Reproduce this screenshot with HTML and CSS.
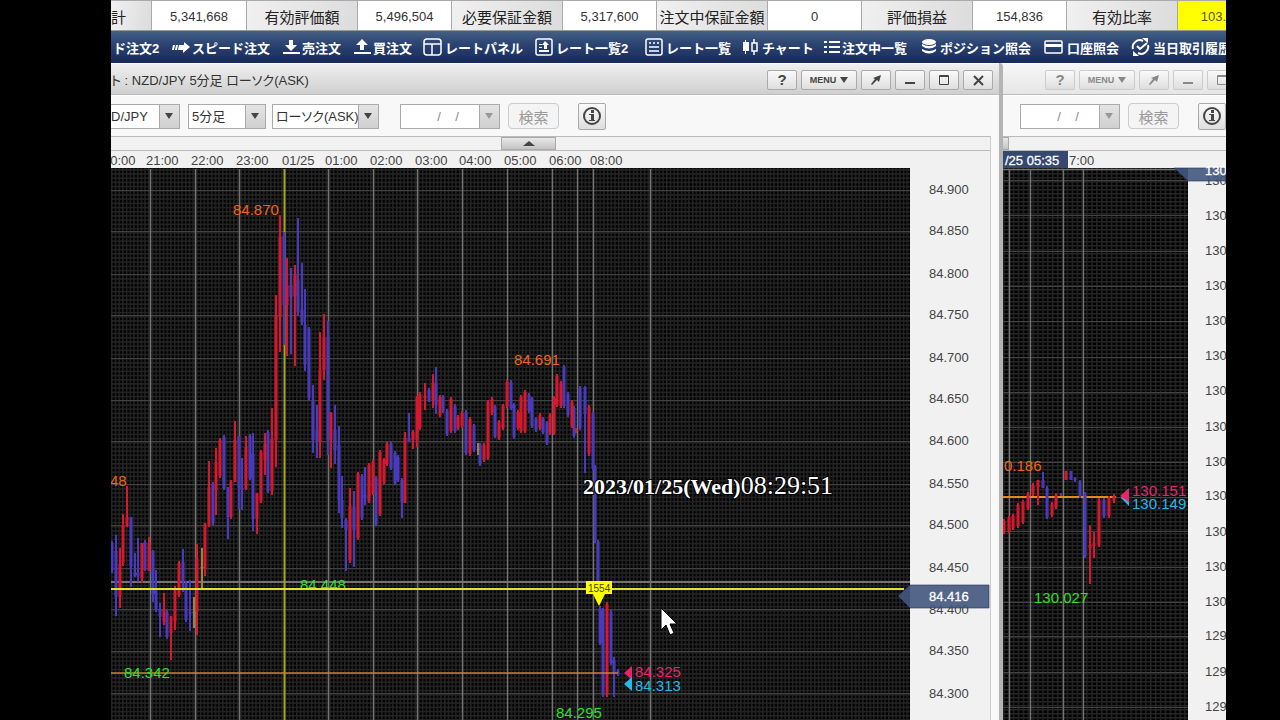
FILE: index.html
```html
<!DOCTYPE html>
<html lang="ja">
<head>
<meta charset="utf-8">
<title>チャート : NZD/JPY 5分足</title>
<link rel="stylesheet" href="styles.css">
</head>
<body>
<div class="desktop">
  <dl class="summary">
    <dt>計</dt><dd>5,341,668</dd>
    <dt>有効評価額</dt><dd>5,496,504</dd>
    <dt>必要保証金額</dt><dd>5,317,600</dd>
    <dt>注文中保証金額</dt><dd>0</dd>
    <dt>評価損益</dt><dd>154,836</dd>
    <dt>有効比率</dt><dd class="alert">103.</dd>
  </dl>

  <nav class="menu">
    <a href="#">ド注文2</a>
    <a href="#"><svg width="18" height="18" viewBox="0 0 18 18"><path d="M1 7l-1 5h2l1-5zM4 7l-1 5h2l1-5zM7 7l-1 5h5v3l7-6-6-5v3z"/></svg>スピード注文</a>
    <a href="#"><svg width="17" height="18" viewBox="0 0 17 18"><path d="M6 2h4v5h4l-6 6-6-6h4zM0 14h17v2H0z"/></svg>売注文</a>
    <a href="#"><svg width="17" height="18" viewBox="0 0 17 18"><path d="M6 12h4V7h4L8 1 2 7h4zM0 14h17v2H0z"/></svg>買注文</a>
    <a href="#"><svg width="20" height="18" viewBox="0 0 20 18"><rect class="line" x="1" y="1" width="17" height="16" rx="3"/><path class="line" d="M1 6h17M9 6v11"/></svg>レートパネル</a>
    <a href="#"><svg width="19" height="18" viewBox="0 0 19 18"><rect class="line" x="1" y="1" width="16" height="16" rx="2"/><path d="M4 6h3v1H4zM4 9h3v1H4zM4 12h10v2H4zM9 11h3V7h2l-4-4-3 4h2z"/></svg>レート一覧2</a>
    <a href="#"><svg width="19" height="18" viewBox="0 0 19 18"><rect class="line" x="1" y="1" width="16" height="16" rx="2"/><path class="line" d="M4 5h2M8 5h2M12 5h2M4 9h10M4 13h10"/></svg>レート一覧</a>
    <a href="#"><svg width="18" height="18" viewBox="0 0 18 18"><path d="M3 2h1v2h3v9H4v3H3v-3H1V4h2z"/><path class="line" d="M10 5h5v8h-5zM12 1v4M12 13v4"/></svg>チャート</a>
    <a href="#"><svg width="16" height="18" viewBox="0 0 16 18"><path d="M0 3h3v2H0zM5 3h11v2H5zM0 8h3v2H0zM5 8h11v2H5zM0 13h3v2H0zM5 13h11v2H5z"/></svg>注文中一覧</a>
    <a href="#"><svg width="17" height="18" viewBox="0 0 17 18"><ellipse cx="8" cy="4" rx="7" ry="3"/><path d="M1 6q7 4 14 0v2q-7 5-14 0zM1 11q7 4 14 0v2q-7 5-14 0z"/></svg>ポジション照会</a>
    <a href="#"><svg width="21" height="18" viewBox="0 0 21 18"><rect class="line" x="1" y="3" width="17" height="12" rx="1"/><path d="M1 6h17v3H1z"/></svg>口座照会</a>
    <a href="#"><svg width="20" height="18" viewBox="0 0 20 18"><path class="line thick" d="M2 11a7 7 0 0 1 10-8M17 7a7 7 0 0 1-10 8M6 8l3 3 7-6"/><path d="M11 0h6v5zM8 18H2v-5z"/></svg>当日取引履歴</a>
  </nav>

  <main class="windows">
    <section class="window window-main">
      <header class="titlebar">
        <h1>ト : NZD/JPY 5分足 ローソク(ASK)</h1>
        <div class="buttons">
          <button type="button" class="help" aria-label="ヘルプ">?</button>
          <button type="button" class="wide">MENU <i class="down"></i></button>
          <button type="button" aria-label="切り離し"><svg width="12" height="12" viewBox="0 0 12 12"><path d="M11 1L9 8 7 6 2 11 1 10 5 5 3 4z"/></svg></button>
          <button type="button" aria-label="最小化"><svg width="12" height="12" viewBox="0 0 12 12"><path d="M1 8h10v2H1z"/></svg></button>
          <button type="button" aria-label="最大化"><svg width="12" height="12" viewBox="0 0 12 12"><path class="line" d="M1.500 1.500h9v9h-9zM1 2.500h10"/></svg></button>
          <button type="button" aria-label="閉じる"><svg width="12" height="12" viewBox="0 0 12 12"><path class="line thick" d="M2 2l9 9M11 2l-9 9"/></svg></button>
        </div>
      </header>
      <form class="toolbar">
        <span class="combo pair"><select aria-label="通貨ペア"><option>D/JPY</option></select><i class="down"></i></span>
        <span class="combo span"><select aria-label="足種"><option>5分足</option></select><i class="down"></i></span>
        <span class="combo style"><select aria-label="チャート種類"><option>ローソク(ASK)</option></select><i class="down"></i></span>
        <span class="combo date"><input type="text" aria-label="日付" value="/&#160;&#160;&#160;&#160;/"><i class="down"></i></span>
        <button type="button" class="search">検索</button>
        <button type="button" class="info" aria-label="情報"><svg width="20" height="20" viewBox="0 0 20 20"><circle class="line thick" cx="10" cy="10" r="8"/><path d="M9 4h3v3H9zM7 8h5v6h1v1H7v-1h2V9H7z"/></svg></button>
      </form>
      <div class="panel">
        <div class="fold"><button type="button" aria-label="折りたたむ"><i class="up"></i></button></div>
        <svg class="chart" viewBox="111 151 879 569">
          <defs>
            <pattern id="mesh" x="111" y="169" width="3.7" height="4.2" patternUnits="userSpaceOnUse"><path class="mesh" d="M0 0H3.7M0 0V4.2"/></pattern>
          </defs>
          <rect class="plot" x="111" y="168" width="799" height="552"/>
          <rect x="111" y="168" width="799" height="552" fill="url(#mesh)"/>
          <path class="grid-h" d="M111 190.500H910M111 231.500H910M111 274.500H910M111 315.500H910M111 358.500H910M111 400.500H910M111 441.500H910M111 484.500H910M111 525.500H910M111 568.500H910M111 609.500H910M111 651.500H910M111 693.500H910"/>
          <path class="grid-v" d="M150.500 169V720M195.500 169V720M239.500 169V720M328.500 169V720M373.500 169V720M417.500 169V720M462.500 169V720M507.500 169V720M552.500 169V720M577.500 169V720M593.500 169V720M650.500 169V720"/>
          <path class="level" d="M111 582H910"/>
          <path class="session" d="M284.500 169V720"/>
          <g id="candles-main"></g>
          <path class="ask" d="M111 673H618"/>
          <g class="time"><text x="103" y="165">20:00</text><text x="146" y="165">21:00</text><text x="191" y="165">22:00</text><text x="236" y="165">23:00</text><text x="282" y="165">01/25</text><text x="325" y="165">01:00</text><text x="370" y="165">02:00</text><text x="415" y="165">03:00</text><text x="459" y="165">04:00</text><text x="504" y="165">05:00</text><text x="549" y="165">06:00</text><text x="590" y="165">08:00</text></g>
          <g class="high"><text x="233" y="215">84.870</text><text x="514" y="365">84.691</text><text x="110" y="486">48</text></g>
          <g class="low"><text x="300" y="590">84.448</text><text x="124" y="678">84.342</text><text x="556" y="718">84.295</text></g>
          <path class="cursor-line" d="M111 589H904"/>
          <path class="flag" d="M586 581h26v13h-7l-6 12-6-12h-7z"/>
          <text class="flag-text" x="588" y="592">1554</text>
          <path class="ask-fill" d="M624 673l8-7v14z"/><path class="bid-fill" d="M624 684l8-7v14z"/>
          <text class="ask-text" x="635" y="677">84.325</text>
          <text class="bid-text" x="635" y="691">84.313</text>
          <g class="price"><text x="929" y="194">84.900</text><text x="929" y="235">84.850</text><text x="929" y="278">84.800</text><text x="929" y="319">84.750</text><text x="929" y="362">84.700</text><text x="929" y="403">84.650</text><text x="929" y="445">84.600</text><text x="929" y="488">84.550</text><text x="929" y="529">84.500</text><text x="929" y="572">84.450</text><text x="929" y="614">84.400</text><text x="929" y="655">84.350</text><text x="929" y="698">84.300</text></g>
          <path class="tag" d="M898 596l12-11h79v23h-79z"/>
          <text class="tag-text" x="929" y="601">84.416</text>
          <text class="clock" x="583" y="494">2023/01/25(Wed)<tspan class="clock-time">08:29:51</tspan></text>
          <path class="pointer" d="M661 608v22l5-5 4 10 4-2-4-9h7z"/>
        </svg>
      </div>
    </section>

    <section class="window window-side">
      <header class="titlebar">
        <div class="buttons">
          <button type="button" class="help" aria-label="ヘルプ">?</button>
          <button type="button" class="wide">MENU <i class="down"></i></button>
          <button type="button" aria-label="切り離し"><svg width="12" height="12" viewBox="0 0 12 12"><path d="M11 1L9 8 7 6 2 11 1 10 5 5 3 4z"/></svg></button>
          <button type="button" aria-label="最小化"><svg width="12" height="12" viewBox="0 0 12 12"><path d="M1 8h10v2H1z"/></svg></button>
          <button type="button" aria-label="最大化"><svg width="12" height="12" viewBox="0 0 12 12"><path class="line" d="M1.500 1.500h9v9h-9zM1 2.500h10"/></svg></button>
        </div>
      </header>
      <form class="toolbar">
        <span class="combo date"><input type="text" aria-label="日付" value="/&#160;&#160;&#160;&#160;/"><i class="down"></i></span>
        <button type="button" class="search">検索</button>
        <button type="button" class="info" aria-label="情報"><svg width="20" height="20" viewBox="0 0 20 20"><circle class="line thick" cx="10" cy="10" r="8"/><path d="M9 4h3v3H9zM7 8h5v6h1v1H7v-1h2V9H7z"/></svg></button>
      </form>
      <div class="panel">
        <div class="fold"><button type="button" aria-label="折りたたむ"></button></div>
        <svg class="chart" viewBox="1003 151 223 569">
          <defs>
            <pattern id="mesh-side" x="1003" y="169" width="4.9" height="4" patternUnits="userSpaceOnUse"><path class="mesh" d="M0 0H4.9M0 0V4"/></pattern>
          </defs>
          <rect class="plot" x="1003" y="168" width="185" height="552"/>
          <rect x="1003" y="168" width="185" height="552" fill="url(#mesh-side)"/>
          <path class="grid-h" d="M1003 180.500H1188M1003 215.500H1188M1003 251.500H1188M1003 286.500H1188M1003 321.500H1188M1003 357.500H1188M1003 392.500H1188M1003 427.500H1188M1003 462.500H1188M1003 497.500H1188M1003 531.500H1188M1003 567.500H1188M1003 602.500H1188M1003 636.500H1188M1003 672.500H1188M1003 707.500H1188"/>
          <path class="grid-v" d="M1009.500 169V720M1030.500 169V720M1063.500 169V720M1083.500 169V720M1003 169.500H1176"/>
          <path class="ask" d="M1003 497H1116"/>
          <g id="candles-side"></g>
          <path class="time-tag" d="M1003 151h65v17h-65z"/>
          <text class="tag-text" x="1005" y="165">/25 05:35</text>
          <text class="time" x="1069" y="165">7:00</text>
          <text class="high" x="1004" y="471">0.186</text>
          <text class="low" x="1034" y="603">130.027</text>
          <path class="bid-fill" d="M1121 498l8-8v16z"/><path class="ask-fill" d="M1120 496l9-8v14z"/>
          <text class="ask-text" x="1132" y="496">130.151</text>
          <text class="bid-text" x="1132" y="509">130.149</text>
          <g class="price"><text x="1205" y="185">130</text><text x="1205" y="220">130</text><text x="1205" y="255">130</text><text x="1205" y="290">130</text><text x="1205" y="325">130</text><text x="1205" y="360">130</text><text x="1205" y="395">130</text><text x="1205" y="431">130</text><text x="1205" y="466">130</text><text x="1205" y="500">130</text><text x="1205" y="536">130</text><text x="1205" y="571">130</text><text x="1205" y="606">130</text><text x="1205" y="640">129</text><text x="1205" y="676">129</text><text x="1205" y="711">129</text></g>
          <path class="tag" d="M1174 168h52v13h-38z"/>
          <text class="tag-text" x="1205" y="175">130</text>
        </svg>
      </div>
    </section>
  </main>
</div>
<script src="chart.js"></script>
</body>
</html>
```

FILE: styles.css
```css
* { box-sizing: border-box; }
:root {
  --ui: "Liberation Sans", "Noto Sans CJK JP", sans-serif;
}
body {
  margin: 0;
  padding: 0 54px 0 111px;
  background: #000;
  font-family: var(--ui);
  color: #333;
}
.desktop {
  height: 100vh;
  overflow: hidden;
  background: #f4f4f4;
  display: flex;
  flex-direction: column;
}
.line { fill: none; stroke: currentColor; stroke-width: 1; }
.thick { stroke-width: 2; }
i.down, i.up { border: 4px solid transparent; }
i.down { border-top: 6px solid currentColor; border-bottom: 0; }
i.up { border-width: 6px; border-bottom: 5px solid #444; border-top: 0; }

.summary {
  margin: 0;
  flex: none;
  height: 31px;
  display: grid;
  grid-template-columns: 41fr 95fr 111fr 94fr 111fr 94fr 111fr 94fr 111fr 94fr 111fr 48fr;
  border-top: 1px solid #aaa;
  border-bottom: 1px solid #999;
  white-space: nowrap;
  overflow: hidden;
}
.summary dt, .summary dd {
  margin: 0;
  padding-top: 1px;
  display: flex;
  align-items: center;
  justify-content: center;
  border-right: 1px solid #aaa;
}
.summary dt { font-size: 15px; color: #222; background: linear-gradient(100deg, #f0f0f0, #dcdcdc); }
.summary dt:first-child { justify-content: flex-start; }
.summary dd { font-size: 13px; background: #fff; }
.summary .alert { background: #ff0; color: #554; justify-content: flex-end; border: 0; }

.menu {
  flex: none;
  height: 32px;
  padding-left: 2px;
  display: grid;
  grid-template-columns: 59fr 111fr 71fr 69fr 112fr 110fr 97fr 82fr 97fr 123fr 87fr minmax(0, 95fr);
  background: linear-gradient(#456083, #2b4472 40%, #172a5a);
  overflow: hidden;
}
.menu a {
  display: flex;
  align-items: center;
  gap: 2px;
  color: #fff;
  font-size: 13px;
  font-weight: 700;
  text-decoration: none;
  white-space: nowrap;
}
.menu svg { flex: none; fill: #fff; }
.menu .line { fill: none; stroke-width: 1.5; }
.menu .thick { stroke-width: 2; }

.windows {
  flex: 1;
  display: grid;
  grid-template-columns: minmax(0, 892fr) minmax(0, 223fr);
  min-height: 0;
}
.window { overflow: hidden; background: #f8f8f8; }
.window-main { border-right: 4px solid #b4b4b4; border-radius: 0 4px 0 0; }
.titlebar {
  height: 32px;
  padding-right: 6px;
  display: flex;
  align-items: center;
  justify-content: space-between;
  border-top: 1px solid #fff;
  border-bottom: 1px solid #bbb;
  background: linear-gradient(#efefef, #cfcfcf);
}
.titlebar h1 {
  margin: 0;
  font-size: 13px;
  font-weight: 400;
  white-space: pre;
  font-feature-settings: "palt";
}
.buttons { display: flex; gap: 4px; margin-top: 1px; }
button {
  flex: none;
  padding: 0;
  display: flex;
  align-items: center;
  justify-content: center;
  border: 1px solid #aaa;
  border-radius: 2px;
  background: linear-gradient(#fafafa, #dedede);
  color: #444;
  font-family: var(--ui);
}
.buttons button { width: 30px; height: 20px; }
.buttons .wide { width: 56px; gap: 4px; font: 700 9px var(--ui); }
.buttons .help { font-size: 15px; font-weight: 700; }
.buttons svg, .info svg { fill: currentColor; }
.buttons .line, .info .line { fill: none; }

.toolbar {
  height: 41px;
  display: flex;
  align-items: center;
  border-top: 1px solid #fff;
}
.combo {
  flex: none;
  height: 25px;
  display: flex;
  align-items: center;
  border: 1px solid #aaa;
  background: linear-gradient(#e4e4e4, #d0d0d0);
}
.combo select, .combo input {
  appearance: none;
  flex: 1;
  min-width: 0;
  height: 100%;
  margin: 0;
  padding: 0 0 0 3px;
  border: 0;
  border-right: 1px solid #aaa;
  border-radius: 0;
  background: #fff;
  color: #333;
  font: 13px var(--ui);
  font-feature-settings: "palt";
}
.combo i { margin: 0 6px 0 5px; color: #444; }
.pair { width: 69px; border-left: 0; }
.pair select { padding-left: 0; }
.span { width: 78px; margin-left: 8px; }
.style { width: 107px; margin-left: 6px; }
.date { width: 100px; margin-left: 21px; }
.date input { text-align: center; color: #888; padding-left: 16px; }
.date i { color: #999; }
.search { width: 51px; height: 26px; margin-left: 8px; border-color: #ccc; border-radius: 4px; background: #f4f4f4; color: #999; font-size: 15px; }
.info { width: 28px; height: 27px; margin-left: 19px; }

.panel { border-top: 1px solid #bbb; background: #f1f1f1; }
.window-main .panel { margin-right: 8px; border-right: 1px solid #ccc; }
.fold { height: 14px; display: flex; justify-content: center; border-bottom: 1px solid #bbb; }
.window-main .fold { padding-right: 44px; }
.window-side .fold { justify-content: flex-start; }
.fold button { width: 55px; height: 13px; border-radius: 0; background: linear-gradient(#e8e8e8, #c4c4c4); }
.window-side .fold button { width: 6px; border-left: 0; }
.chart { display: block; width: 100%; height: auto; }

.window-side .titlebar { background: linear-gradient(#f6f6f6, #e6e6e6); padding: 0; }
.window-side .buttons { margin-left: 42px; }
.window-side .buttons button { color: #888; border-color: #ccc; }
.window-side .date { margin-left: 17px; }

.plot { fill: #000; }
.mesh { stroke: #252525; stroke-width: 3; fill: none; }
.grid-h { stroke: #424242; }
.grid-v { stroke: #727272; stroke-width: 1.5; fill: none; }
.level { stroke: #77707a; stroke-width: 2; }
.session { stroke: #a3a326; stroke-width: 2; }
.ask { stroke: #c8803a; stroke-width: 1.5; }
.window-side .ask { stroke: #e08a20; stroke-width: 2; }
.cursor-line { stroke: #e0e030; stroke-width: 2; }
.red { stroke: #d6182f; }
.blue { stroke: #483abc; }
.tan { stroke: #9a8445; }
.wick { stroke-width: 2; fill: none; }
.body { stroke-width: 3; fill: none; }
.chart text { font-family: var(--ui); font-size: 15px; }
.chart .time, .chart .time text, .chart .price text { font-size: 13px; fill: #444; }
.chart .high, .high text { fill: #f0641e; }
.chart .low, .low text { fill: #2ce02c; }
.ask-text, .ask-fill { fill: #e8246c; }
.bid-text, .bid-fill { fill: #28b8e4; }
.flag { fill: #ff0; }
.chart .flag-text { fill: #440; font-size: 10px; }
.tag { fill: #44577f; fill-opacity: 0.9; stroke: #1f2e55; stroke-width: 1; stroke-opacity: 0.6; }
.time-tag { fill: #354870; }
.chart .tag-text { font-size: 13px; fill: #fff; stroke: #fff; stroke-width: 0.3; }
.chart .clock { font: 700 22px "Liberation Serif", serif; fill: #fff; stroke: #000; stroke-width: 2; paint-order: stroke; }
.clock-time { font-size: 26px; font-weight: 400; }
.pointer { fill: #fff; stroke: #000; stroke-width: 1; }
```

FILE: chart.js
```js
// Each candle: colour, x, high, low and optionally the open/close span.
const main = `b 112 541 573;b 116 535 616 551 597;r 120 548 608 564 597;r 123 514 566 526 563;r 127 486 527 517 526;b 131 517 587 517 567;b 135 553 577 573 575;b 138 538 582 573 576;r 142 543 583 543 578;b 145 540 571;r 149 537 571 543 571;b 153 550 602 551 594;b 156 570 612 590 609;b 160 603 637 609 617;r 164 593 625 610 622;b 167 610 639;r 171 616 660 616 633;r 175 586 630 588 622;r 179 561 597;b 183 549 592 562 582;b 186 581 622;b 190 580 631 612 614;t 194 597 628 612 613;r 197 544 635 558 612;t 202 548 588 567 568;r 205 523 576 524 569;r 209 461 527 487 525;b 213 482 525;r 216 448 515 462 490;r 220 438 478;b 224 435 490;b 228 487 539 487 517;r 231 480 519;r 235 421 482 440 482;b 239 436 509 436 488;b 242 458 510 488 490;r 246 436 490 447 489;b 250 434 480;b 253 433 531 454 519;r 257 493 534 493 519;r 261 450 503;r 265 433 475 444 460;b 268 430 493;r 272 408 495 439 491;r 276 295 467 316 440;r 280 215 352 237 317;b 284 232 345 236 305;r 287 258 356 285 305;b 291 268 354 285 297;r 295 265 366 275 296;b 298 218 316 280 312;b 302 263 325 310 322;b 305 289 371 325 365;b 309 327 400;b 313 385 453 400 440;b 317 405 458 430 442;r 320 332 458 370 442;r 324 314 380 337 370;b 328 321 455 337 440;r 331 412 468 413 440;b 335 405 464 430 450;b 339 426 513 445 500;b 342 476 528 500 518;b 346 518 571 520 530;r 350 488 563 506 560;b 354 491 567 507 530;r 358 472 540;b 362 474 520;b 365 467 505 495 498;r 369 463 503;r 373 460 495;b 376 476 526;r 380 450 516;r 384 458 484;r 387 442 466;b 391 442 470;b 395 451 485;b 398 455 482;b 402 478 518 480 502;r 405 432 503 438 503;b 409 413 442 438 441;r 413 430 449 432 440;r 417 396 447 397 440;r 420 392 430;r 425 383 410 396 398;b 429 388 402;r 433 374 408 383 400;b 436 367 414 383 405;r 440 395 417;b 443 395 413;b 447 409 436;r 451 397 433;b 455 404 433;r 458 415 430;r 462 411 428;b 466 410 455;r 470 417 456;b 474 424 452;t 478 443 455 449 450;b 480 443 466;r 484 443 462;r 488 400 460;r 492 397 415;b 495 405 438;r 499 420 440;r 503 404 430;r 507 380 408;b 511 380 410;b 514 403 439;r 518 410 430;r 521 395 433;r 525 390 433;b 529 393 413;b 532 397 428;b 536 417 432;r 540 413 430;b 543 417 434;b 547 421 445;r 550 413 435;r 554 396 435;r 557 374 407;r 561 381 408;b 564 365 408;b 568 392 417;r 572 400 428;b 574 406 438;r 576 428 433;b 580 386 430;b 585 386 473 387 414;r 589 405 456;b 593 412 470;b 595 465 543;b 598 540 590;b 600 606 645;b 603 608 697;r 607 602 697;b 611 610 665;b 614 657 697 660 674;b 618 669 676`;
const side = `r 1004 519 534;r 1009 516 533;r 1013 514 530;r 1018 503 528;r 1023 500 524;r 1028 492 510;r 1033 483 496;r 1038 480 505 480 487;b 1043 472 488 480 488;b 1047 486 519;r 1052 502 517;r 1056 493 509;b 1061 493 496;r 1066 471 480 471 480;b 1071 471 480 471 480;b 1075 477 482;b 1080 480 498;b 1085 492 558;r 1090 525 584 545 548;r 1094 532 558 543 546;r 1099 498 547;b 1104 498 518;r 1109 496 518;r 1114 494 503`;

const names = { r: "red", b: "blue", t: "tan" };

function draw(id, data) {
  const paths = {};
  for (const item of data.split(";")) {
    const [colour, ...rest] = item.split(" ");
    const [x, high, low, open = high + 2, close = low - 2] = rest.map(Number);
    for (const [part, from, to] of [["wick", high, low], ["body", open, close]]) {
      const key = names[colour] + " " + part;
      paths[key] = (paths[key] || "") + `M${x} ${from}V${to}`;
    }
  }
  document.getElementById(id).innerHTML = Object.entries(paths)
    .map(([name, d]) => `<path class="${name}" d="${d}"/>`)
    .join("");
}

draw("candles-main", main);
draw("candles-side", side);
```
